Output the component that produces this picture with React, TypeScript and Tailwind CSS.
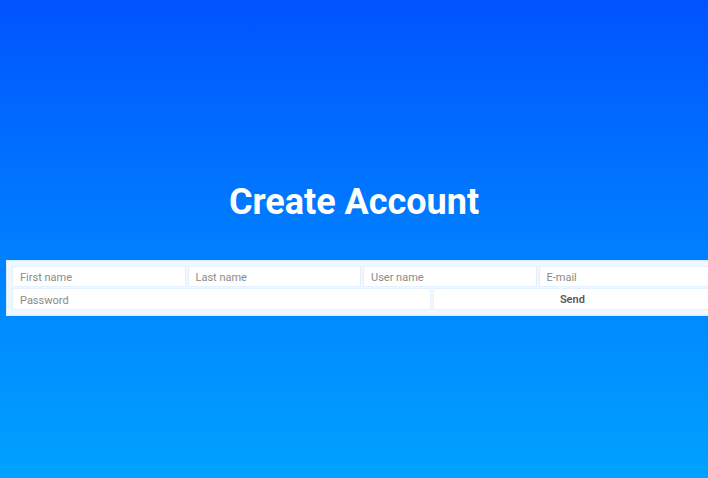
import React from 'react';

const App: React.FC = () => {
  const inputCls =
    'h-[21px] w-full min-w-0 bg-white border border-[#e6f1ff] px-[7px] pt-[2px] text-[11px] text-[#444] placeholder:text-[#8a8a8a] outline-none';

  return (
    <div
      className="h-[478px] w-[708px] overflow-hidden bg-gradient-to-b from-[#0052ff] to-[#00a2ff] pt-[176px]"
      style={{ fontFamily: 'Roboto, "Liberation Sans", sans-serif' }}
    >
      <h1 className="text-center text-[36px] font-bold leading-[52px] text-white">Create Account</h1>

      <form className="mt-[32px] ml-[6px] w-[712px] border border-[#d9ebff] bg-[#eff7ff] p-[5px]">
        <div className="grid grid-cols-4 gap-[2px]">
          <input className={inputCls} placeholder="First name" />
          <input className={inputCls} placeholder="Last name" />
          <input className={inputCls} placeholder="User name" />
          <input className={inputCls} placeholder="E-mail" />
        </div>
        <div className="mt-[1px] grid grid-cols-[3fr_2fr] gap-[2px]">
          <input type="password" className={inputCls + ' h-[22px]'} placeholder="Password" />
          <button
            type="button"
            className="h-[22px] w-full border border-[#e6f1ff] bg-white pt-[2px] text-[11px] font-semibold text-[#5a5a5a]"
          >
            Send
          </button>
        </div>
      </form>
    </div>
  );
};

export default App;
